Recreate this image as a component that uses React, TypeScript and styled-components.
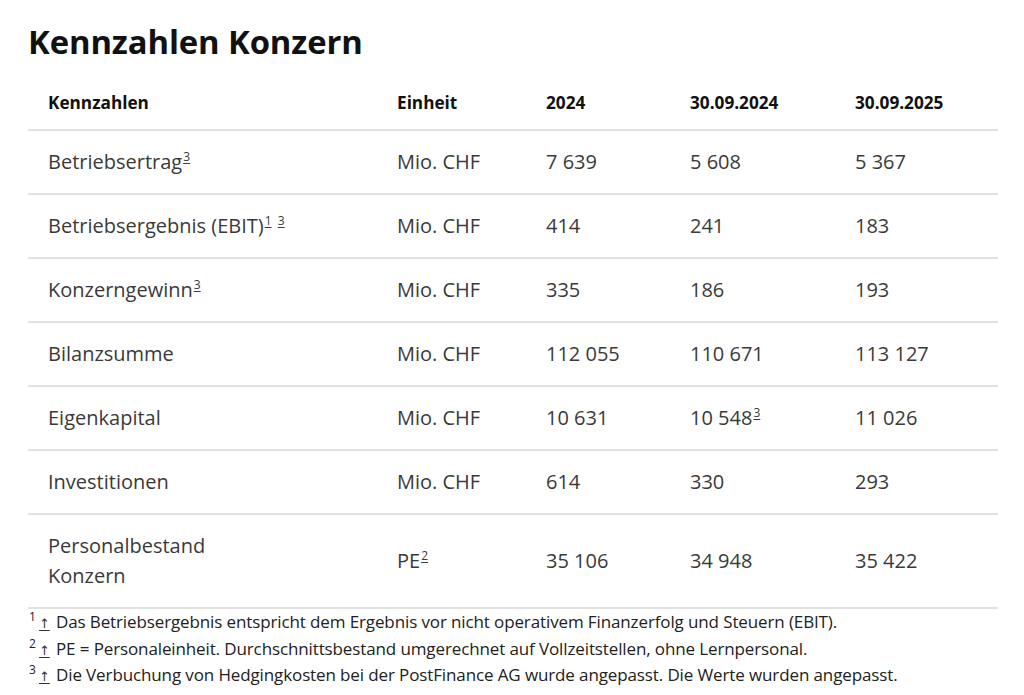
import React from "react";
import styled, { createGlobalStyle } from "styled-components";

const Global = createGlobalStyle`
  html, body { margin: 0; padding: 0; background: #ffffff; }
  body { font-family: "Open Sans", "Noto Sans", Arial, sans-serif; color: #333; }
`;

const Page = styled.div`
  padding: 22px 26px 0 28px;
  width: 970px;
`;

const Title = styled.h1`
  margin: 0 0 14px 0;
  font-size: 32.8px;
  line-height: 40px;
  font-weight: 700;
  color: #111;
  letter-spacing: -0.1px;
`;

const Table = styled.table`
  width: 970px;
  border-collapse: collapse;
  table-layout: fixed;
`;

const HeadCell = styled.th`
  text-align: left;
  font-size: 17.2px;
  line-height: 22px;
  font-weight: 700;
  color: #111;
  padding: 16px 20px 15px 20px;
  border-bottom: 2px solid #e2e2e2;
`;

const Cell = styled.td`
  text-align: left;
  vertical-align: middle;
  font-size: 20px;
  line-height: 30px;
  font-weight: 400;
  color: #3a3a3a;
  padding: 16px 20px;
  border-bottom: 2px solid #e2e2e2;
`;

const Ref = styled.sup`
  font-size: 12px;
  line-height: 0;
  vertical-align: 8px;
  margin-left: 1px;
  text-decoration: underline;
  text-underline-offset: 2px;
  color: #3a3a3a;
`;

const Notes = styled.div`
  padding-top: 1px;
`;

const Note = styled.div`
  font-size: 17px;
  line-height: 24.5px;
  color: #222;
  letter-spacing: -0.12px;
  white-space: nowrap;
`;

const NoteNum = styled.sup`
  display: inline-block;
  font-size: 12px;
  line-height: 0;
  vertical-align: 7px;
  width: 10px;
  padding-left: 1px;
`;

const BackLink = styled.span`
  display: inline-block;
  width: 17px;
  text-decoration: underline;
  text-underline-offset: 2px;
  color: #333;
  font-family: "DejaVu Sans", sans-serif;
  font-size: 13px;
`;

type Row = {
  label: React.ReactNode;
  unit: React.ReactNode;
  values: React.ReactNode[];
};

const rows: Row[] = [
  { label: <>Betriebsertrag<Ref>3</Ref></>, unit: "Mio. CHF", values: ["7 639", "5 608", "5 367"] },
  { label: <>Betriebsergebnis (EBIT)<Ref>1</Ref> <Ref>3</Ref></>, unit: "Mio. CHF", values: ["414", "241", "183"] },
  { label: <>Konzerngewinn<Ref>3</Ref></>, unit: "Mio. CHF", values: ["335", "186", "193"] },
  { label: "Bilanzsumme", unit: "Mio. CHF", values: ["112 055", "110 671", "113 127"] },
  { label: "Eigenkapital", unit: "Mio. CHF", values: ["10 631", <>10 548<Ref>3</Ref></>, "11 026"] },
  { label: "Investitionen", unit: "Mio. CHF", values: ["614", "330", "293"] },
  { label: <>Personalbestand<br />Konzern</>, unit: <>PE<Ref>2</Ref></>, values: ["35 106", "34 948", "35 422"] },
];

const notes = [
  "Das Betriebsergebnis entspricht dem Ergebnis vor nicht operativem Finanzerfolg und Steuern (EBIT).",
  "PE = Personaleinheit. Durchschnittsbestand umgerechnet auf Vollzeitstellen, ohne Lernpersonal.",
  "Die Verbuchung von Hedgingkosten bei der PostFinance AG wurde angepasst. Die Werte wurden angepasst.",
];

export default function App() {
  return (
    <>
      <Global />
      <Page>
        <Title>Kennzahlen Konzern</Title>
        <Table>
          <colgroup>
            <col style={{ width: 349 }} />
            <col style={{ width: 149 }} />
            <col style={{ width: 144 }} />
            <col style={{ width: 165 }} />
            <col style={{ width: 163 }} />
          </colgroup>
          <thead>
            <tr>
              <HeadCell>Kennzahlen</HeadCell>
              <HeadCell>Einheit</HeadCell>
              <HeadCell>2024</HeadCell>
              <HeadCell>30.09.2024</HeadCell>
              <HeadCell>30.09.2025</HeadCell>
            </tr>
          </thead>
          <tbody>
            {rows.map((r, i) => (
              <tr key={i}>
                <Cell>{r.label}</Cell>
                <Cell>{r.unit}</Cell>
                {r.values.map((v, j) => (
                  <Cell key={j}>{v}</Cell>
                ))}
              </tr>
            ))}
          </tbody>
        </Table>
        <Notes>
          {notes.map((n, i) => (
            <Note key={i}>
              <NoteNum>{i + 1}</NoteNum>
              <BackLink>↑</BackLink>
              {n}
            </Note>
          ))}
        </Notes>
      </Page>
    </>
  );
}
